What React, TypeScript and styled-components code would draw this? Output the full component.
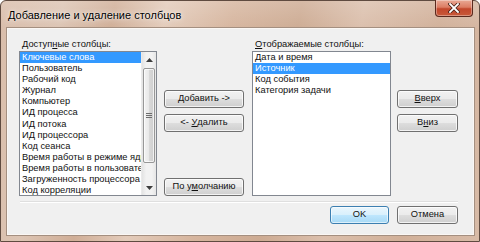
import React from 'react';
import styled, { createGlobalStyle, css } from 'styled-components';

const Global = createGlobalStyle`
  html, body { margin: 0; padding: 0; width: 480px; height: 242px; overflow: hidden; background: #ffffff; }
  #root { width: 480px; height: 242px; }
  * { box-sizing: border-box; }
`;

const Window = styled.div`
  position: relative;
  width: 480px;
  height: 242px;
  display: flex;
  flex-direction: column;
  border: 1px solid #5f4b40;
  border-radius: 6px 6px 0 0;
  padding: 0 5px 6px 6px;
  background:
    linear-gradient(180deg, rgba(255,255,255,0.18) 0%, rgba(255,255,255,0) 30px),
    linear-gradient(100deg, #d9bdaa 0%, #dcc4b3 12%, #d0ae97 22%, #e3cbba 32%, #d6b59e 45%, #cdab93 58%, #dbbfac 70%, #d1b099 85%, #d8bba7 100%);
  font-family: "Liberation Sans", Arial, sans-serif;
`;

const TitleBar = styled.div`
  height: 27px;
  display: flex;
  align-items: center;
  padding-left: 1px;
`;

const Title = styled.span`
  font-size: 11px;
  color: #000;
  text-shadow: 0 0 6px rgba(255,255,255,0.9), 0 0 2px rgba(255,255,255,0.8);
`;

const CloseButton = styled.div`
  position: absolute;
  top: -1px;
  right: 6px;
  width: 38px;
  height: 17px;
  border: 1px solid #5a2a1e;
  border-top: none;
  border-radius: 0 0 4px 4px;
  background: linear-gradient(180deg, #e9a995 0%, #dc7d64 45%, #c2472c 55%, #c85a3a 100%);
  box-shadow: inset 0 0 0 1px rgba(255,255,255,0.35);
  display: flex;
  align-items: center;
  justify-content: center;
`;

const Client = styled.div`
  flex: 1;
  display: flex;
  flex-direction: column;
  background: #f0f0f0;
  border: 1px solid #fbf7f4;
  box-shadow: 0 0 0 1px #a48f80;
  padding: 9px 15px 0 11px;
  font-size: 9.3px;
  color: #111;
`;

const Body = styled.div`
  display: flex;
  height: 158px;
`;

const Panel = styled.div<{ $w: number; $ml?: number }>`
  width: ${p => p.$w}px;
  margin-left: ${p => p.$ml ?? 0}px;
  display: flex;
  flex-direction: column;
`;

const Label = styled.div`
  height: 13px;
  line-height: 13px;
  padding-left: 3px;
`;

const ListBox = styled.div`
  height: 145px;
  border: 1px solid #828790;
  background: #fff;
  display: flex;
`;

const Items = styled.div`
  flex: 1;
  min-width: 0;
  overflow: hidden;
`;

const Item = styled.div<{ $sel?: boolean }>`
  height: 11.1px;
  line-height: 11.1px;
  padding-left: 2px;
  white-space: nowrap;
  overflow: hidden;
  ${p => p.$sel && css`
    background: #3399ff;
    color: #fff;
  `}
`;

const ScrollBar = styled.div`
  width: 15px;
  display: flex;
  flex-direction: column;
  background: linear-gradient(90deg, #e3e3e3 0%, #f2f2f2 30%, #f2f2f2 70%, #e6e6e6 100%);
  border-left: 1px solid #eaeaea;
`;

const Arrow = styled.div`
  height: 15px;
  display: flex;
  align-items: center;
  justify-content: center;
`;

const Track = styled.div`
  flex: 1;
  padding: 1px 1px 0 1px;
`;

const Thumb = styled.div`
  height: 95px;
  border: 1px solid #979797;
  border-radius: 2px;
  background: linear-gradient(90deg, #f3f3f3 0%, #e8e8e8 50%, #d8d8d8 51%, #cfcfcf 100%);
  box-shadow: inset 0 0 0 1px rgba(255,255,255,0.7);
  display: flex;
  align-items: center;
  justify-content: center;
`;

const Grip = styled.div`
  width: 6px;
  height: 5px;
  border-top: 1px solid #6d6d6d;
  border-bottom: 1px solid #6d6d6d;
  position: relative;
  &::after {
    content: "";
    position: absolute;
    left: 0; right: 0; top: 1px;
    border-top: 1px solid #6d6d6d;
  }
`;

const ButtonColumn = styled.div<{ $w: number; $ml: number }>`
  width: ${p => p.$w}px;
  margin-left: ${p => p.$ml}px;
  padding-top: 52px;
  display: flex;
  flex-direction: column;
  gap: 6px;
`;

const Button = styled.div<{ $default?: boolean; $w?: number; $push?: boolean }>`
  height: 18px;
  ${p => p.$w && css`width: ${p.$w}px;`}
  ${p => p.$push && css`margin-top: auto;`}
  border: 1px solid ${p => (p.$default ? '#3c7fb1' : '#707070')};
  border-radius: 3px;
  background: ${p => p.$default
    ? 'linear-gradient(180deg, #eaf6fd 0%, #d9f0fc 48%, #bee6fd 52%, #a7d9f5 100%)'
    : 'linear-gradient(180deg, #f2f2f2 0%, #ebebeb 48%, #dddddd 52%, #cfcfcf 100%)'};
  box-shadow: inset 0 0 0 1px ${p => (p.$default ? 'rgba(255,255,255,0.6)' : 'rgba(255,255,255,0.75)')};
  display: flex;
  align-items: center;
  justify-content: center;
  line-height: 1;
  white-space: pre;
`;

const U = styled.span`
  text-decoration: underline;
`;

const Separator = styled.div`
  margin-top: 5px;
  margin-left: 1px;
  background: #dfdfdf;
  border-bottom: 1px solid #ffffff;
  height: 2px;
`;

const Footer = styled.div`
  display: flex;
  justify-content: flex-end;
  gap: 8px;
  margin-top: 3px;
`;

const available = [
  'Ключевые слова',
  'Пользователь',
  'Рабочий код',
  'Журнал',
  'Компьютер',
  'ИД процесса',
  'ИД потока',
  'ИД процессора',
  'Код сеанса',
  'Время работы в режиме ядра',
  'Время работы в пользовательском режиме',
  'Загруженность процессора',
  'Код корреляции',
];

const shown = ['Дата и время', 'Источник', 'Код события', 'Категория задачи'];

export default function App() {
  return (
    <>
      <Global />
      <Window>
        <TitleBar>
          <Title>Добавление и удаление столбцов</Title>
        </TitleBar>
        <CloseButton>
          <svg width="12" height="10" viewBox="0 0 12 10">
            <path d="M2 1 L10 9 M10 1 L2 9" stroke="#4a2218" strokeWidth="3.4" strokeLinecap="square" />
            <path d="M2 1 L10 9 M10 1 L2 9" stroke="#ffffff" strokeWidth="1.8" strokeLinecap="square" />
          </svg>
        </CloseButton>
        <Client>
          <Body>
            <Panel $w={138}>
              <Label>Доступ<U>н</U>ые столбцы:</Label>
              <ListBox>
                <Items>
                  {available.map((t, i) => (
                    <Item key={t} $sel={i === 0}>{t}</Item>
                  ))}
                </Items>
                <ScrollBar>
                  <Arrow>
                    <svg width="7" height="4" viewBox="0 0 7 4"><path d="M3.5 0 L7 4 L0 4 Z" fill="#3d3d3d" /></svg>
                  </Arrow>
                  <Track>
                    <Thumb><Grip /></Thumb>
                  </Track>
                  <Arrow>
                    <svg width="7" height="4" viewBox="0 0 7 4"><path d="M0 0 L7 0 L3.5 4 Z" fill="#3d3d3d" /></svg>
                  </Arrow>
                </ScrollBar>
              </ListBox>
            </Panel>
            <ButtonColumn $w={80} $ml={7}>
              <Button><U>Д</U>обавить -&gt;</Button>
              <Button>{'<- '}<U>У</U>далить</Button>
              <Button $push>По у<U>м</U>олчанию</Button>
            </ButtonColumn>
            <Panel $w={139} $ml={8}>
              <Label><U>О</U>тображаемые столбцы:</Label>
              <ListBox>
                <Items>
                  {shown.map((t, i) => (
                    <Item key={t} $sel={i === 1}>{t}</Item>
                  ))}
                </Items>
              </ListBox>
            </Panel>
            <ButtonColumn $w={61} $ml={6}>
              <Button><U>В</U>верх</Button>
              <Button>В<U>н</U>из</Button>
            </ButtonColumn>
          </Body>
          <Separator />
          <Footer>
            <Button $default $w={59}>OK</Button>
            <Button $w={61}>Отмена</Button>
          </Footer>
        </Client>
      </Window>
    </>
  );
}
